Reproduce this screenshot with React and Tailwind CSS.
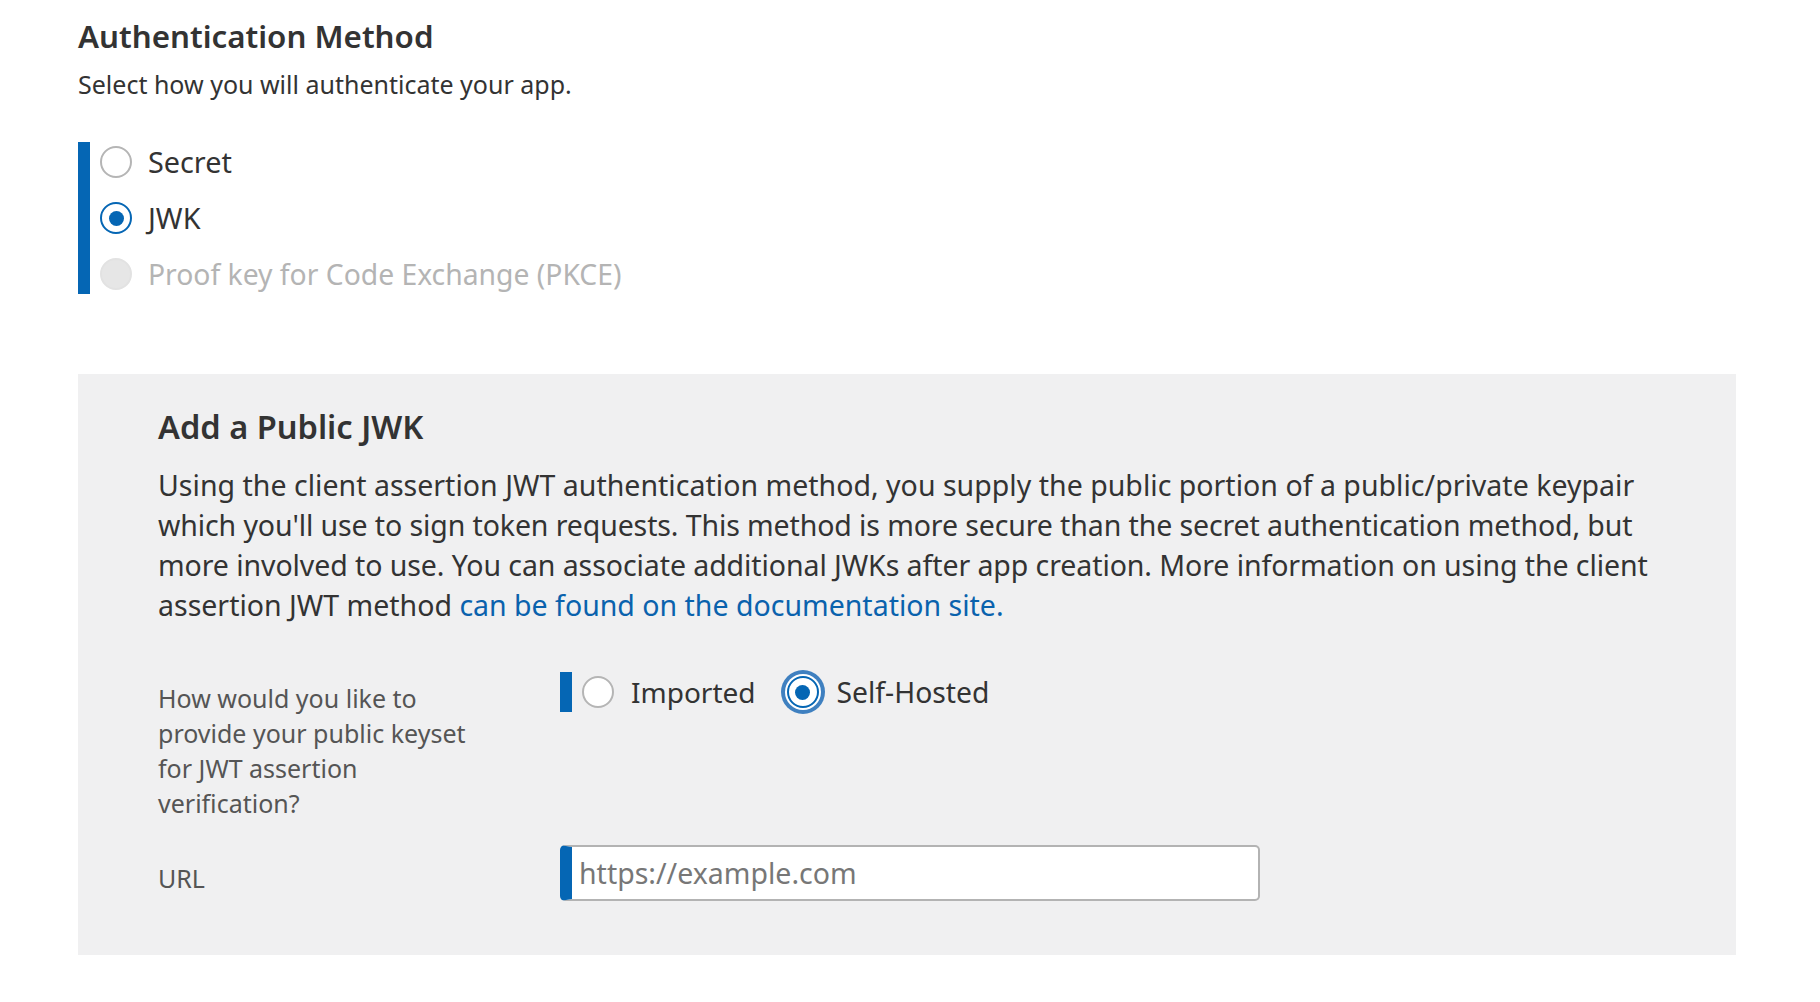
import React from "react";

function Radio({ state = "off", focus = false }) {
  const base = "flex h-8 w-8 shrink-0 items-center justify-center rounded-full border-2";
  const tone =
    state === "on"
      ? "border-[#0566b4] bg-white"
      : state === "disabled"
      ? "border-[#e2e2e2] bg-[#e6e6e6]"
      : "border-[#b5b5b5] bg-white";
  const ring = focus ? "shadow-[0_0_0_2px_#ffffff,0_0_0_6px_#3f80c0]" : "";
  return (
    <span className={`${base} ${tone} ${ring}`}>
      {state === "on" && <span className="h-[15px] w-[15px] rounded-full bg-[#0566b4]" />}
    </span>
  );
}

function Option({ state, label, className }) {
  return (
    <label className="flex h-10 items-center gap-4">
      <Radio state={state} />
      <span className={className}>{label}</span>
    </label>
  );
}

export default function App() {
  return (
    <div className="min-h-[1002px] bg-white pl-[78px] pr-[84px] pt-4 font-['Noto_Sans',sans-serif] text-[#333333]">
      <h2 className="h-10 text-[31.3px] font-semibold leading-10">Authentication Method</h2>
      <p className="mt-2 h-10 text-[25px] leading-10">Select how you will authenticate your app.</p>

      <div className="mt-[38px] flex h-[152px] flex-col gap-4 border-l-[12px] border-[#0566b4] pl-[10px]">
        <Option state="off" label="Secret" className="text-[28.8px]" />
        <Option state="on" label="JWK" className="text-[28.8px]" />
        <Option state="disabled" label="Proof key for Code Exchange (PKCE)" className="text-[28.3px] text-[#b4b4b4]" />
      </div>

      <section className="mt-[80px] h-[581px] bg-[#f0f0f1] pl-[80px] pt-[33px]">
        <h3 className="h-10 text-[32.6px] font-semibold leading-10">Add a Public JWK</h3>
        <p className="mt-[18px] whitespace-nowrap text-[28.5px] leading-10">
          <span className="tracking-[0.02px]">Using the client assertion JWT authentication method, you supply the public portion of a public/private keypair</span>
          <br />
          <span className="tracking-[-0.11px]">which you'll use to sign token requests. This method is more secure than the secret authentication method, but</span>
          <br />
          <span className="tracking-[-0.08px]">more involved to use. You can associate additional JWKs after app creation. More information on using the client</span>
          <br />
          <span>assertion JWT method </span>
          <a className="text-[#0a62ad]">can be found on the documentation site.</a>
        </p>

        <div className="mt-[47px] grid grid-cols-[402px_1fr] gap-y-6">
          <div className="w-[340px] pt-[9px] text-[25px] leading-[35px] text-[#555555]">
            How would you like to
            <br />
            provide your public keyset
            <br />
            for JWT assertion
            <br />
            verification?
          </div>
          <div className="flex h-10 items-center">
            <div className="h-10 w-3 bg-[#0566b4]" />
            <div className="ml-[10px]">
              <Radio />
            </div>
            <span className="ml-[17px] text-[28px]">Imported</span>
            <div className="ml-[31px]">
              <Radio state="on" focus />
            </div>
            <span className="ml-[18px] text-[28.3px]">Self-Hosted</span>
          </div>

          <div className="pt-4 text-[25px] leading-[35px] text-[#555555]">URL</div>
          <div className="flex h-[56px] w-[700px] rounded-[5px] border-y-2 border-r-2 border-l-[12px] border-[#b3b3b3] border-l-[#0566b4] bg-white">
            <input
              placeholder="https://example.com"
              className="min-w-0 flex-1 bg-transparent pl-[7px] text-[28.5px] outline-none placeholder:text-[#777777]"
            />
          </div>
        </div>
      </section>
    </div>
  );
}
